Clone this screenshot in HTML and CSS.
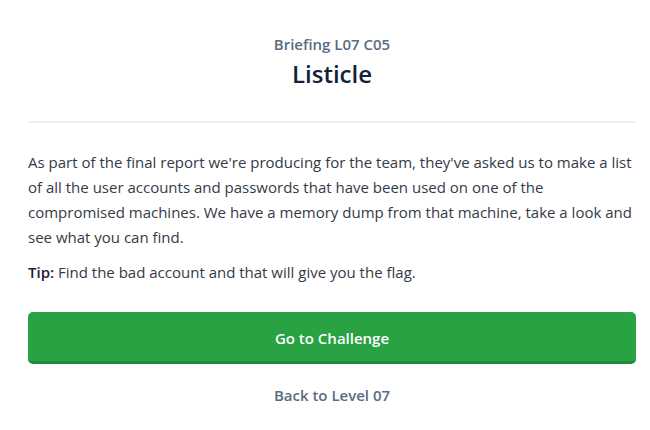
FILE: index.html
```html
<!DOCTYPE html>
<html>
<head>
<meta charset="utf-8">
<link rel="stylesheet" href="styles.css">
</head>
<body>
<main class="briefing">
  <header class="head">
    <div class="kicker">Briefing L07 C05</div>
    <h1 class="title">Listicle</h1>
  </header>
  <hr class="rule">
  <p class="text">As part of the final report we're producing for the team, they've asked us to make a list of all the user accounts and passwords that have been used on one of the compromised machines. We have a memory dump from that machine, take a look and see what you can find.</p>
  <p class="tip"><strong>Tip:</strong> Find the bad account and that will give you the flag.</p>
  <a class="btn" href="#">Go to Challenge</a>
  <a class="back" href="#">Back to Level 07</a>
</main>
</body>
</html>
```
FILE: styles.css
```css
html, body { margin: 0; padding: 0; background: #fff; }
body { font-family: "Open Sans", "Lato", sans-serif; color: #343a47; }
.briefing { padding: 33px 14px 0 28px; display: flex; flex-direction: column; }
.head { text-align: center; }
.kicker { font-size: 15px; line-height: 22px; color: #5b6b80; font-weight: 600; }
.title { margin: 4px 0 0; font-size: 24px; line-height: 30px; font-weight: 600; color: #11223b; }
.rule { border: 0; border-top: 2px solid #eceff3; margin: 32px 0 0; }
.text { margin: 27px 0 0; font-size: 15px; line-height: 25px; }
.tip { margin: 10px 0 0; font-size: 15px; line-height: 25px; }
.tip strong { color: #1d2330; font-weight: 600; }
.btn { margin-top: 27px; height: 52px; box-sizing: border-box; border-radius: 5px; background: #28a242; border-bottom: 3px solid #218b38; color: #fff; font-weight: 600; font-size: 15px; text-decoration: none; display: flex; align-items: center; justify-content: center; padding-top: 2px; }
.back { margin-top: 20px; align-self: center; font-size: 15px; line-height: 22px; color: #5b6b80; font-weight: 600; text-decoration: none; }
```
